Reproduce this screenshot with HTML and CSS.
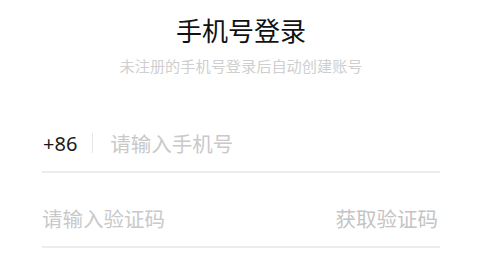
FILE: index.html
```html
<!DOCTYPE html>
<html lang="zh-CN">
<head>
<meta charset="utf-8">
<link rel="stylesheet" href="styles.css">
</head>
<body>
<div class="page">
  <h1 class="title">手机号登录</h1>
  <p class="subtitle">未注册的手机号登录后自动创建账号</p>
  <div class="form">
    <div class="row">
      <span class="prefix">+86</span>
      <span class="sep"></span>
      <span class="placeholder">请输入手机号</span>
    </div>
    <div class="row row-code">
      <span class="placeholder">请输入验证码</span>
      <span class="code-btn">获取验证码</span>
    </div>
  </div>
</div>
</body>
</html>
```
FILE: styles.css
```css
html, body {
  margin: 0;
  padding: 0;
  background: #fff;
}
body {
  font-family: "Noto Sans", "Noto Sans CJK SC", sans-serif;
}
.page {
  width: 398px;
  margin-left: 42px;
  padding-top: 12px;
}
.title {
  margin: 0;
  font-family: "Noto Sans CJK SC", sans-serif;
  font-weight: 400;
  font-size: 26px;
  line-height: 36px;
  text-align: center;
  color: #111;
}
.subtitle {
  margin: 7px 0 0;
  font-family: "Noto Sans CJK SC", sans-serif;
  font-size: 15.2px;
  line-height: 20px;
  text-align: center;
  color: #cfcfcf;
}
.form {
  margin-top: 22px;
}
.row {
  display: flex;
  align-items: center;
  height: 28px;
  padding: 32px 0 14px;
  border-bottom: 2px solid #ececec;
}
.prefix {
  font-size: 20px;
  color: #1a1a1a;
  margin-left: 1px;
}
.sep {
  width: 1px;
  height: 20px;
  background: #e6e6e6;
  margin: 0 17px 0 15px;
}
.placeholder,
.code-btn {
  font-family: "Noto Sans CJK SC", sans-serif;
  font-size: 20.5px;
  color: #c9c9c9;
}
.row-code {
  justify-content: space-between;
  padding-top: 31px;
}
.code-btn {
  color: #c4c4c4;
  margin-right: 2px;
}
```
